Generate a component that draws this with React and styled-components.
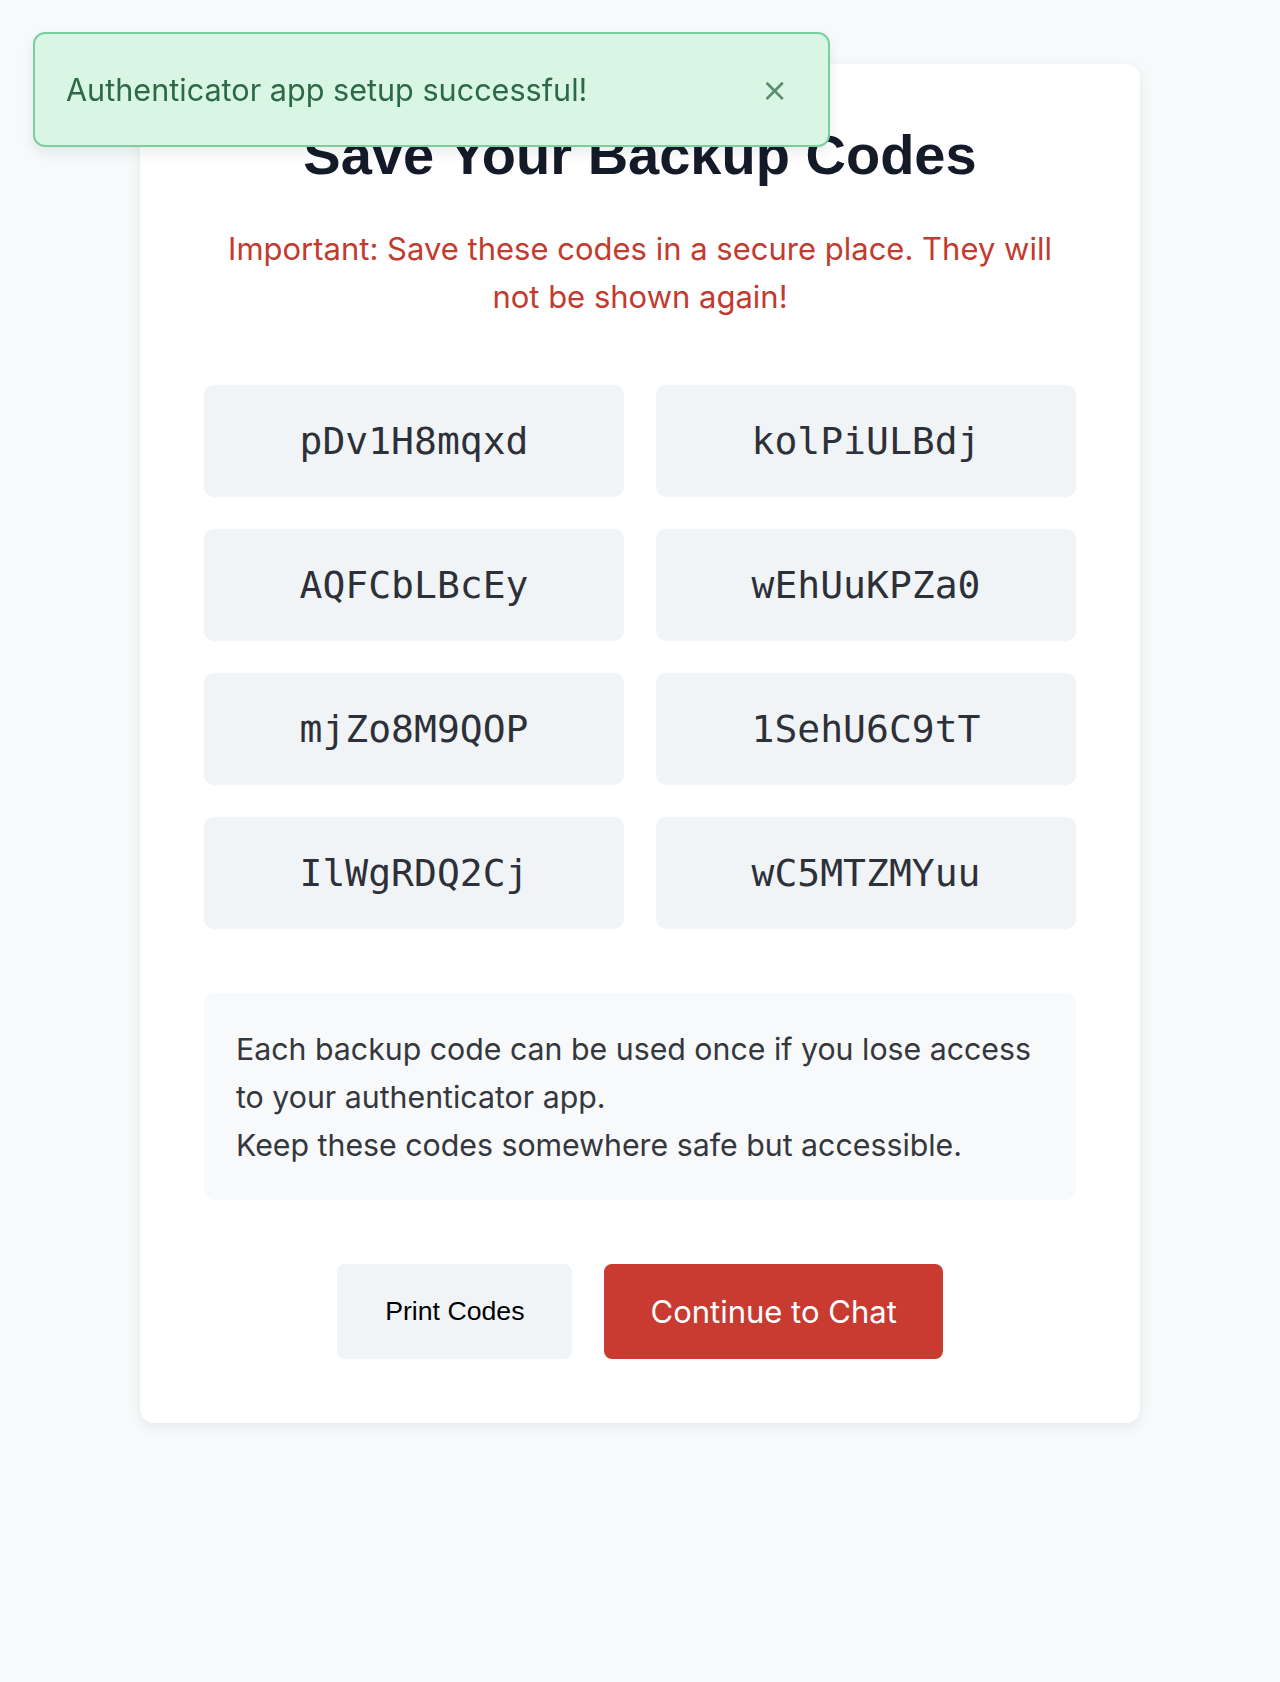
import React from 'react'
import styled, { createGlobalStyle } from 'styled-components'

const GlobalStyle = createGlobalStyle`
    body {
        margin: 0;
        background: #f7fafb;
        font-family: 'Inter', 'Noto Sans', sans-serif;
    }
`;

const Page = styled.div`
    min-height: 1682px;
    padding-top: 64px;
    box-sizing: border-box;
`;

const Toast = styled.div`
    position: fixed;
    top: 32px;
    left: 33px;
    width: 797px;
    height: 115px;
    box-sizing: border-box;
    display: flex;
    align-items: center;
    justify-content: space-between;
    padding: 0 40px 0 31px;
    background: #d9f6e5;
    border: 2px solid #7bcf9f;
    border-radius: 12px;
    box-shadow: 0 6px 14px rgba(0, 0, 0, 0.08);
    color: #2c6a45;
    font-size: 30.6px;
    z-index: 10;
`;

const Close = styled.button`
    border: 0;
    background: none;
    padding: 0;
    color: #5b8d70;
    font-family: 'DejaVu Sans', sans-serif;
    font-size: 32px;
    line-height: 1;
    cursor: pointer;
`;

const Card = styled.div`
    width: 1000px;
    margin: 0 auto;
    box-sizing: border-box;
    padding: 58px 64px 64px;
    background: #fff;
    border-radius: 14px;
    box-shadow: 0 4px 14px rgba(0, 0, 0, 0.07);
`;

const Title = styled.h2`
    margin: 0;
    text-align: center;
    font-family: 'Liberation Sans', Arial, sans-serif;
    font-weight: 700;
    font-size: 56px;
    color: #141a28;
`;

const Warning = styled.p`
    margin: 38px 0 64px;
    text-align: center;
    color: #c23b2f;
    font-size: 31px;
    line-height: 48px;
`;

const Codes = styled.div`
    display: grid;
    grid-template-columns: 1fr 1fr;
    gap: 32px;
`;

const Code = styled.div`
    height: 112px;
    display: flex;
    align-items: center;
    justify-content: center;
    background: #f1f4f6;
    border-radius: 10px;
    font-family: 'DejaVu Sans Mono', monospace;
    font-size: 38px;
    color: #2d3038;
`;

const Info = styled.div`
    margin-top: 64px;
    padding: 32px 32px 31px;
    background: #f7f9fa;
    border-radius: 10px;
    color: #34373d;
    font-size: 30.3px;
    line-height: 48px;
`;

const Actions = styled.div`
    margin-top: 64px;
    display: flex;
    justify-content: center;
    gap: 32px;
`;

const Button = styled.button`
    height: 95px;
    border: 0;
    border-radius: 8px;
    cursor: pointer;
    padding: 0 ${p => (p.$primary ? 46 : 48)}px;
    background: ${p => (p.$primary ? '#c93b31' : '#f1f4f6')};
    color: ${p => (p.$primary ? '#fff' : '#000')};
    font-family: ${p => (p.$primary ? "'Inter', sans-serif" : "'Liberation Sans', Arial, sans-serif")};
    font-size: ${p => (p.$primary ? 31 : 26.67)}px;
`;

const codes = [
    'pDv1H8mqxd', 'kolPiULBdj',
    'AQFCbLBcEy', 'wEhUuKPZa0',
    'mjZo8M9QOP', '1SehU6C9tT',
    'IlWgRDQ2Cj', 'wC5MTZMYuu',
]

const App = () => {
    return (
        <Page>
            <GlobalStyle />
            <Toast>
                <span>Authenticator app setup successful!</span>
                <Close>×</Close>
            </Toast>
            <Card>
                <Title>Save Your Backup Codes</Title>
                <Warning>
                    Important: Save these codes in a secure place. They will not be shown again!
                </Warning>
                <Codes>
                    {codes.map(c => <Code key={c}>{c}</Code>)}
                </Codes>
                <Info>
                    Each backup code can be used once if you lose access to your authenticator app.
                    <br />
                    Keep these codes somewhere safe but accessible.
                </Info>
                <Actions>
                    <Button>Print Codes</Button>
                    <Button $primary>Continue to Chat</Button>
                </Actions>
            </Card>
        </Page>
    );
}

export default App
